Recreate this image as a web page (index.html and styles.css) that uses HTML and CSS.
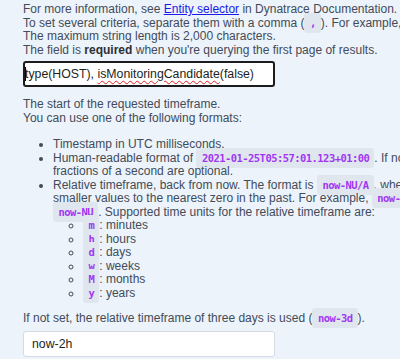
FILE: index.html
```html
<!DOCTYPE html>
<html>
<head>
<meta charset="utf-8">
<link rel="stylesheet" href="styles.css">
</head>
<body>
<div class="panel">
  <p class="desc">For more information, see <a href="#">Entity selector</a> in Dynatrace Documentation.<br>To set several criteria, separate them with a comma (<code>,</code>). For example, <code>type(HOST),healthState(HEALTHY)</code>.<br>The maximum string length is 2,000 characters.<br>The field is <b>required</b> when you're querying the first page of results.</p>
  <div class="field focused"><span class="value"><span class="caret"></span>type(HOST), <span class="spell">isMonitoringCandidate</span>(false)</span></div>
  <p class="desc gap">The start of the requested timeframe.<br>You can use one of the following formats:</p>
  <ul class="list">
    <li>Timestamp in UTC milliseconds.</li>
    <li>Human-readable format of <code>2021-01-25T05:57:01.123+01:00</code>. If no time zone is specified, UTC is used. You can use a space character instead of the T. Seconds and<br>fractions of a second are optional.</li>
    <li>Relative timeframe, back from now. The format is <code>now-NU/A</code>, where N is the amount of time, U is the unit of time, and A is an alignment. The alignment rounds all the<br>smaller values to the nearest zero in the past. For example, <code>now-1y/w</code> is one year back, aligned by a week. You can also specify relative timeframe without an alignment:<br><code>now-NU</code>. Supported time units for the relative timeframe are:
      <ul class="sub">
        <li><code>m</code>: minutes</li>
        <li><code>h</code>: hours</li>
        <li><code>d</code>: days</li>
        <li><code>w</code>: weeks</li>
        <li><code>M</code>: months</li>
        <li><code>y</code>: years</li>
      </ul>
    </li>
  </ul>
  <p class="desc">If not set, the relative timeframe of three days is used (<code>now-3d</code>).</p>
  <div class="field"><span class="value">now-2h</span></div>
</div>
</body>
</html>
```
FILE: styles.css
```css
html, body {
  margin: 0;
  padding: 0;
  background: #ecf3fb;
  overflow: hidden;
}
body {
  width: 400px;
  height: 359px;
}
.panel {
  width: 400px;
  overflow: hidden;
  font-family: "Liberation Sans", Arial, sans-serif;
  font-size: 12px;
  line-height: 13.5px;
  color: #434b58;
  padding: 3px 0 0 23px;
  box-sizing: border-box;
}
.desc {
  margin: 0;
  white-space: nowrap;
}
.desc.gap {
  margin-top: 11px;
}
a {
  color: #1a1ae6;
  text-decoration: underline;
}
b {
  color: #2b2f36;
}
code {
  font-family: "DejaVu Sans Mono", monospace;
  font-size: 10.5px;
  letter-spacing: -0.55px;
  font-weight: bold;
  color: #a038f2;
  background: #e0e6ee;
  border-radius: 3px;
  padding: 4px 5px 4px 5.5px;
}
.field {
  margin-top: 5px;
  width: 252px;
  height: 26px;
  box-sizing: border-box;
  background: #fff;
  border: 1px solid #d4dbe4;
  border-radius: 3px;
  padding: 0 0 0 8px;
  color: #1d1f23;
  white-space: nowrap;
  overflow: hidden;
  font-size: 12.3px;
  line-height: 24px;
}
.field.focused {
  border: 2px solid #1c1c1c;
  padding-left: 0;
  margin-top: 4px;
  line-height: 22px;
}
.value {
  display: block;
}
.caret {
  display: inline-block;
  width: 1px;
  height: 14px;
  background: #000;
  vertical-align: -3px;
  margin-right: -1px;
}
.spell {
  text-decoration: underline wavy #e02020;
  text-decoration-thickness: 1px;
  text-underline-offset: 2px;
}
.list {
  margin: 13px 0 12px;
  padding-left: 30px;
  white-space: nowrap;
}
.list > li {
  list-style: disc;
}
.sub {
  margin: 0;
  padding-left: 30px;
}
.sub li {
  list-style: circle;
}
```
